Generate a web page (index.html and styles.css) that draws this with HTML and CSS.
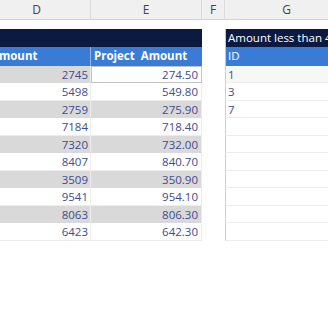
FILE: index.html
```html
<!DOCTYPE html>
<html lang="en">
<head>
    <meta charset="UTF-8">
    <meta name="viewport" content="width=device-width, initial-scale=1.0">
    <title>Sheet</title>
    <link rel="stylesheet" href="styles.css">
</head>
<body>
    <div class="sheet">
        <div class="col-heads">
            <div class="col-head col-d">D</div>
            <div class="col-head col-e">E</div>
            <div class="col-head col-f">F</div>
            <div class="col-head col-g">G</div>
        </div>

        <div class="grid">
            <!-- partial row above the tables -->
            <div class="cell gap"></div>
            <div class="cell gap"></div>
            <div class="cell gap"></div>
            <div class="cell gap"></div>

            <!-- title band -->
            <div class="cell title"></div>
            <div class="cell title"></div>
            <div class="cell blank"></div>
            <div class="cell title title-g">Amount less than 4</div>

            <!-- table headings -->
            <div class="cell head head-d">Amount</div>
            <div class="cell head head-e">Project  Amount</div>
            <div class="cell blank"></div>
            <div class="cell head head-g">ID</div>
        </div>
        <div class="grid" id="rows"></div>
    </div>

    <script>
        const amounts = [2745, 5498, 2759, 7184, 7320, 8407, 3509, 9541, 8063, 6423];
        const ids = ['1', '3', '7'];
        const rows = document.getElementById('rows');

        amounts.forEach((amount, i) => {
            const shade = i % 2 === 0 ? ' shade' : '';

            const d = document.createElement('div');
            d.className = 'cell num num-d' + shade;
            d.textContent = amount;

            const e = document.createElement('div');
            e.className = 'cell num num-e' + (i === 0 ? ' active' : shade);
            e.textContent = (amount / 10).toFixed(2);

            const f = document.createElement('div');
            f.className = 'cell blank';

            const g = document.createElement('div');
            g.className = 'cell id' + (i === 0 ? ' first' : '');
            g.textContent = ids[i] || '';

            rows.append(d, e, f, g);
        });
    </script>
</body>
</html>
```

FILE: styles.css
```css
* {
    margin: 0;
    padding: 0;
    box-sizing: border-box;
}

body {
    font-family: "Open Sans", "Segoe UI", sans-serif;
    font-size: 11.5px;
    background: white;
    overflow: hidden;
}

.sheet {
    width: 328px;
    height: 320px;
    overflow: hidden;
}

.col-heads,
.grid {
    display: grid;
    grid-template-columns: 108px 111px 23px 124px;
    margin-left: -17px;
    width: 366px;
}

.col-head {
    height: 20px;
    background: #f0f0f0;
    border-bottom: 1px solid #d2d2d2;
    border-right: 1px solid #dcdcdc;
    color: #444;
    font-size: 12px;
    text-align: center;
    line-height: 20px;
}

.cell {
    height: 17.5px;
    line-height: 17.5px;
    white-space: pre;
    overflow: hidden;
}

.gap {
    height: 9px;
}

.title {
    height: 18px;
    line-height: 18px;
    background: #0c1a42;
    color: white;
}

.title-g {
    padding-left: 2px;
    border-left: 1px solid #c8c8c8;
}

.head {
    height: 18.5px;
    line-height: 18.5px;
    background: #3a7bd5;
    color: white;
}

.head-d {
    font-weight: bold;
    padding-left: 8px;
    border-right: 1px solid #8fb2e8;
}

.head-e {
    font-weight: bold;
    padding-left: 3px;
}

.head-g {
    padding-left: 2px;
    border-left: 1px solid #c8c8c8;
}

.num {
    text-align: right;
    color: #3c4d92;
    border-bottom: 1px solid #ececec;
}

.num-d {
    padding-right: 2px;
    border-right: 1px solid #ececec;
}

.num-e {
    padding-right: 3px;
    border-right: 1px solid #ececec;
}

.shade {
    background: #d9d9d9;
    border-bottom-color: #d9d9d9;
}

.active {
    border: 1px solid #c4c4c4;
    line-height: 15.5px;
}

.id {
    color: #3c4d92;
    padding-left: 2px;
    border-left: 1px solid #cfcfcf;
    border-bottom: 1px solid #ededed;
}

.first {
    background: #f7f7f7;
}
```
